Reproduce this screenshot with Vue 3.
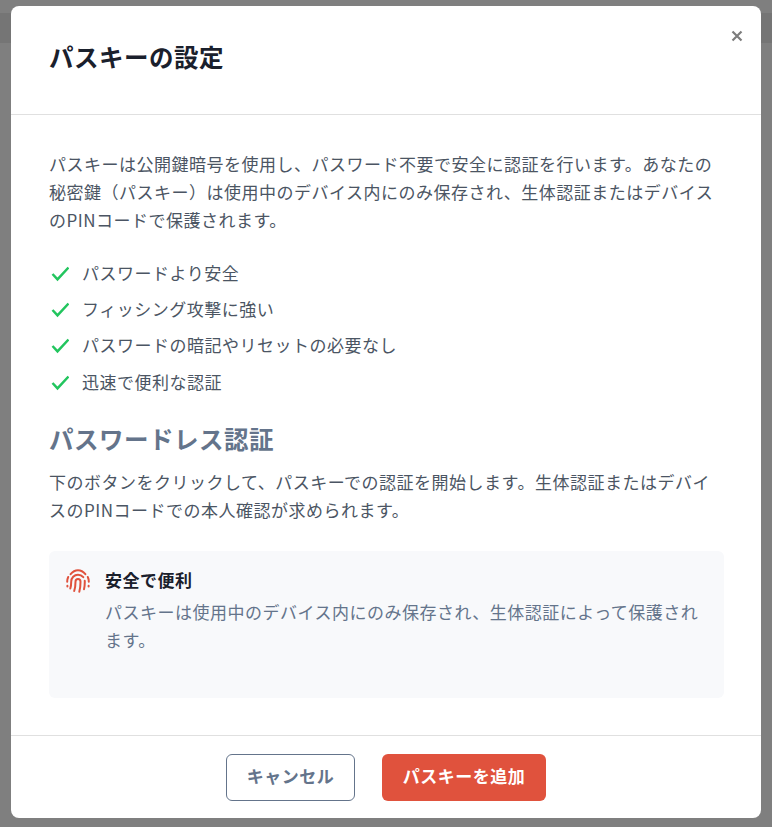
<template>
  <div class="page">
    <div class="page-band"></div>
    <div class="backdrop">
      <div class="modal">
        <div class="modal-header">
          <h2>パスキーの設定</h2>
          <button class="close-button" aria-label="閉じる">
            <svg width="12" height="12" viewBox="0 0 12 12">
              <path d="M1.500 1.500l9 9M10.500 1.500l-9 9" stroke="#7d7d7d" stroke-width="2.2" fill="none" />
            </svg>
          </button>
        </div>

        <div class="modal-body">
          <p class="intro">
            パスキーは公開鍵暗号を使用し、パスワード不要で安全に認証を行います。あなたの秘密鍵（パスキー）は使用中のデバイス内にのみ保存され、生体認証またはデバイスのPINコードで保護されます。
          </p>

          <ul class="benefits">
            <li v-for="item in benefits" :key="item">
              <svg class="check" width="20" height="17" viewBox="0 0 20 17">
                <path d="M3.500 9l5 5.300L19.500 2.500" stroke="#22c55e" stroke-width="2.500" fill="none" />
              </svg>
              <span>{{ item }}</span>
            </li>
          </ul>

          <h3>パスワードレス認証</h3>
          <p class="lead">
            下のボタンをクリックして、パスキーでの認証を開始します。生体認証またはデバイスのPINコードでの本人確認が求められます。
          </p>

          <div class="notice">
            <svg class="fingerprint" width="24" height="24" viewBox="0 0 24 24" fill="none" stroke="#e0523d" stroke-width="2" stroke-linecap="round">
              <path d="M4.600 5.200C6.500 2.800 9.100 1.200 12 1.200s5.500 1.600 7.400 4" />
              <path d="M1.200 12.800c0-1.800.3-3.300 1-4.800" />
              <path d="M22.800 12.800c0-1.800-.3-3.300-1-4.800" />
              <path d="M1.400 16.800v.6" />
              <path d="M22.600 16.800v.6" />
              <path d="M4.300 19.500c.6-1.800.9-4 .9-6.800 0-3.900 3-7 6.800-7 2.100 0 4 1 5.300 2.500" />
              <path d="M18.700 11.800c.1.400.1.700.1 1 0 2.900-.2 5.300-.8 7.500" />
              <path d="M8.200 22c.9-2.800 1.300-5.700 1.300-9.300 0-1.500 1.100-2.700 2.500-2.700s2.500 1.200 2.500 2.700c0 3.900-.3 7-1.200 10" />
            </svg>
            <div class="notice-text">
              <strong>安全で便利</strong>
              <p>パスキーは使用中のデバイス内にのみ保存され、生体認証によって保護されます。</p>
            </div>
          </div>
        </div>

        <div class="modal-footer">
          <button class="cancel-button">キャンセル</button>
          <button class="add-button">パスキーを追加</button>
        </div>
      </div>
    </div>
  </div>
</template>

<script setup>
const benefits = [
  'パスワードより安全',
  'フィッシング攻撃に強い',
  'パスワードの暗記やリセットの必要なし',
  '迅速で便利な認証'
]
</script>

<style>
html,
body {
  margin: 0;
}
</style>

<style scoped>
.page {
  position: relative;
  height: 827px;
  overflow: hidden;
  background: #fff;
  font-family: "Noto Sans CJK JP", "Noto Sans", sans-serif;
  font-size: 17px;
  letter-spacing: 0.5px;
  color: #4b5563;
}
.page-band {
  height: 30px;
  background: #ebebeb;
  border-top: 13px solid #fff;
}
.backdrop {
  position: absolute;
  inset: 0;
  background: rgba(0, 0, 0, 0.5);
  padding: 6px 11px 9px;
  box-sizing: border-box;
}
.modal {
  height: 812px;
  background: #fff;
  border-radius: 8px;
  display: flex;
  flex-direction: column;
}
.modal-header {
  position: relative;
  height: 108px;
  padding: 0 38px;
  border-bottom: 1px solid #e0e0e0;
  display: flex;
  align-items: center;
  flex-shrink: 0;
}
h2 {
  margin: 0 0 7px;
  font-size: 24.5px;
  font-weight: 700;
  line-height: 36px;
  color: #1a202c;
}
.close-button {
  position: absolute;
  top: 24px;
  right: 18px;
  width: 12px;
  height: 12px;
  padding: 0;
  border: none;
  background: none;
  display: flex;
}
.modal-body {
  flex: 1;
  padding: 35px 37px 0 38px;
}
p {
  margin: 0;
  line-height: 28px;
}
.intro {
  margin-bottom: 20px;
}
.benefits {
  list-style: none;
  margin: 0;
  padding: 0;
}
.benefits li {
  display: flex;
  align-items: center;
  gap: 13px;
  height: 36.4px;
}
.check {
  flex-shrink: 0;
  margin-top: 2px;
}
h3 {
  margin: 21px 0 11px;
  font-size: 24.5px;
  font-weight: 700;
  line-height: 36px;
  color: #64748b;
}
.notice {
  margin-top: 27px;
  height: 147px;
  padding: 15px 18px 0 17px;
  box-sizing: border-box;
  background: #f8f9fb;
  border-radius: 6px;
  display: flex;
  gap: 15px;
}
.fingerprint {
  flex-shrink: 0;
  margin-top: 3px;
}
.notice-text strong {
  display: block;
  font-weight: 700;
  line-height: 28px;
  color: #1a202c;
}
.notice-text p {
  margin-top: 4px;
  color: #64748b;
}
.modal-footer {
  height: 83px;
  border-top: 1px solid #e0e0e0;
  display: flex;
  justify-content: center;
  gap: 27px;
  padding-top: 18px;
  box-sizing: border-box;
  flex-shrink: 0;
}
button {
  font-family: inherit;
  letter-spacing: inherit;
}
.cancel-button,
.add-button {
  height: 47px;
  padding: 0 0 5px;
  font-size: 17px;
  font-weight: 700;
  border-radius: 6px;
  box-sizing: border-box;
}
.cancel-button {
  width: 129px;
  background: #fff;
  border: 1px solid #64748b;
  color: #64748b;
}
.add-button {
  width: 164px;
  background: #e0523d;
  border: none;
  color: #fff;
}
</style>
